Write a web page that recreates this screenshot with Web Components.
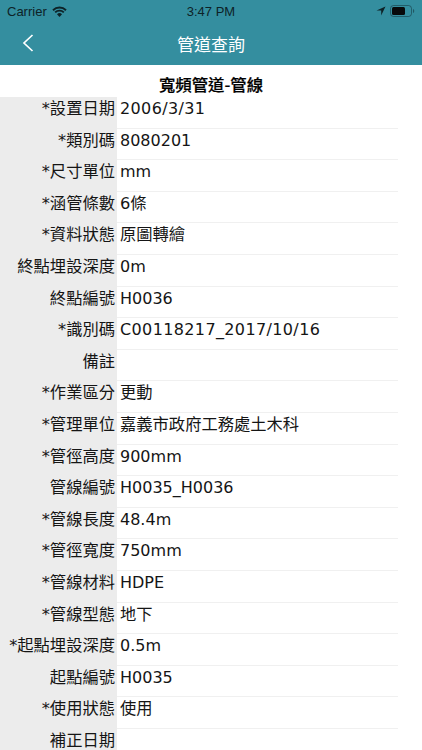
<!DOCTYPE html>
<html lang="zh-Hant">
<head>
<meta charset="utf-8">
<style>
html, body { margin: 0; padding: 0; background: #fff; }
body { width: 422px; height: 750px; overflow: hidden; font-family: "DejaVu Sans", "Noto Sans CJK TC", sans-serif; }
</style>
</head>
<body>
<app-header></app-header>
<detail-table heading="寬頻管道-管線">
	<detail-row label="*設置日期" spaced>2006/3/31</detail-row>
	<detail-row label="*類別碼">8080201</detail-row>
	<detail-row label="*尺寸單位">mm</detail-row>
	<detail-row label="*涵管條數" cjk>6條</detail-row>
	<detail-row label="*資料狀態" cjk>原圖轉繪</detail-row>
	<detail-row label="終點埋設深度">0m</detail-row>
	<detail-row label="終點編號">H0036</detail-row>
	<detail-row label="*識別碼" spaced>C00118217_2017/10/16</detail-row>
	<detail-row label="備註"></detail-row>
	<detail-row label="*作業區分" cjk>更動</detail-row>
	<detail-row label="*管理單位" cjk>嘉義市政府工務處土木科</detail-row>
	<detail-row label="*管徑高度">900mm</detail-row>
	<detail-row label="管線編號">H0035_H0036</detail-row>
	<detail-row label="*管線長度">48.4m</detail-row>
	<detail-row label="*管徑寬度">750mm</detail-row>
	<detail-row label="*管線材料">HDPE</detail-row>
	<detail-row label="*管線型態" cjk>地下</detail-row>
	<detail-row label="*起點埋設深度">0.5m</detail-row>
	<detail-row label="起點編號">H0035</detail-row>
	<detail-row label="*使用狀態" cjk>使用</detail-row>
	<detail-row label="補正日期"></detail-row>
</detail-table>
<script>
class AppHeader extends HTMLElement {
	constructor() {
		super();
		this.shadowDOM = this.attachShadow({ mode: "open" });
	}

	connectedCallback() {
		this.shadowDOM.innerHTML = `
		<style>
		:host { display: block; height: 65px; background: #348e9f; }
		.status {
			height: 22px;
			display: grid;
			grid-template-columns: 1fr auto 1fr;
			align-items: center;
			padding: 0 7px;
			font: 13px "Liberation Sans", sans-serif;
			color: #0d2227;
		}
		.left { display: flex; align-items: center; gap: 5px; }
		.right { display: flex; align-items: center; justify-content: flex-end; gap: 4px; }
		.nav {
			height: 43px;
			display: flex;
			align-items: center;
			justify-content: center;
			position: relative;
			color: #fff;
			font: 17px "Noto Sans CJK TC", sans-serif;
		}
		.back { position: absolute; left: 22px; top: 12px; }
		svg { display: block; }
		</style>
		<div class="status">
			<div class="left">Carrier
				<svg width="15" height="11" viewBox="0 0 15 11">
					<path d="M1 4.200A9.300 9.300 0 0 1 14 4.200M3.200 6.400A6.200 6.200 0 0 1 11.800 6.400" fill="none" stroke="#0d2227" stroke-width="1.900"/>
					<path d="M5 8.300A3.500 3.500 0 0 1 10 8.300L7.500 11Z" fill="#0d2227"/>
				</svg>
			</div>
			<div>3:47 PM</div>
			<div class="right">
				<svg width="10" height="10" viewBox="0 0 10 10"><path d="M9.500 .5L.5 4.600H5.200V9.400Z" fill="#0d2227"/></svg>
				<svg width="25" height="12" viewBox="0 0 25 12">
					<rect x=".5" y=".5" width="21" height="11" rx="3" fill="none" stroke="#0d2227" stroke-opacity=".45"/>
					<rect x="2" y="2" width="13" height="8" rx="1.500" fill="#07090a"/>
					<path d="M23 4v4c.8-.3 1.200-1 1.200-2s-.4-1.700-1.200-2Z" fill="#0d2227" fill-opacity=".5"/>
				</svg>
			</div>
		</div>
		<div class="nav">
			<svg class="back" width="12" height="18" viewBox="0 0 12 18"><path d="M10.500 1L2 9l8.500 8" fill="none" stroke="#fff" stroke-width="1.700"/></svg>
			管道查詢
		</div>`;
	}
}

class DetailTable extends HTMLElement {
	constructor() {
		super();
		this.shadowDOM = this.attachShadow({ mode: "open" });
	}

	connectedCallback() {
		this.shadowDOM.innerHTML = `
		<style>
		:host { display: block; }
		h1 {
			margin: 0;
			height: 32px;
			text-align: center;
			font: 500 16.400px/39px "Noto Sans CJK TC", sans-serif;
			color: #000;
			-webkit-text-stroke: .2px #000;
		}
		</style>
		<h1>${this.getAttribute("heading")}</h1>
		<slot></slot>`;
	}
}

class DetailRow extends HTMLElement {
	constructor() {
		super();
		this.shadowDOM = this.attachShadow({ mode: "open" });
	}

	connectedCallback() {
		this.shadowDOM.innerHTML = `
		<style>
		:host {
			display: grid;
			grid-template-columns: 117px 281px;
			height: 31.600px;
			font-size: 16px;
			line-height: 23.600px;
			color: #151515;
		}
		:host([spaced]) .value { letter-spacing: .37px; }
		:host([cjk]) .value { font-size: 16.300px; }
		.label { background: #ececec; text-align: right; padding-right: 2px; white-space: nowrap; font-size: 16.300px; }
		.value { padding-left: 3px; border-bottom: 1px solid #f0f0f0; box-sizing: border-box; white-space: nowrap; }
		</style>
		<div class="label">${this.getAttribute("label")}</div>
		<div class="value"><slot></slot></div>`;
	}
}

customElements.define("app-header", AppHeader);
customElements.define("detail-table", DetailTable);
customElements.define("detail-row", DetailRow);
</script>
</body>
</html>
